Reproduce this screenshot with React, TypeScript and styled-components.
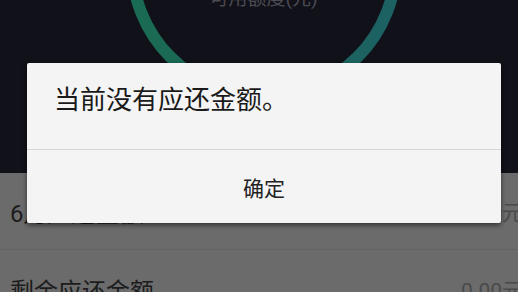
import styled, { createGlobalStyle } from 'styled-components'

// --------------------------------------------------------------------------------------------------------------
const GlobalStyle = createGlobalStyle`
  html, body {
    margin: 0;
    padding: 0;
    width: 518px;
    height: 292px;
    overflow: hidden;
  }
  body {
    font-family: Roboto, "Noto Sans CJK SC", sans-serif;
  }
`

const Page = styled.div`
  position: relative;
  width: 518px;
  height: 292px;
  overflow: hidden;
  background: #6b6b6b;
  display: flex;
  flex-direction: column;
`

const Header = styled.div`
  height: 173px;
  flex-shrink: 0;
  background: #11111a;
  overflow: hidden;
  display: flex;
  flex-direction: column;
  align-items: center;
`

const RingBox = styled.div`
  position: relative;
  flex-shrink: 0;
  width: 276px;
  height: 276px;
  margin-top: -174px;
  margin-left: 9px;
  display: flex;
  flex-direction: column;
  align-items: center;
  justify-content: flex-end;
  padding-bottom: 91px;
  box-sizing: border-box;
`

const RingSvg = styled.svg`
  position: absolute;
  inset: 0;
`

const RingLabel = styled.div`
  position: relative;
  font-size: 19px;
  line-height: 24px;
  color: #4b4b52;
`

const Row = styled.div<{ $height: number }>`
  height: ${(p) => p.$height}px;
  flex-shrink: 0;
  display: flex;
  align-items: center;
  justify-content: space-between;
  padding-left: 10px;
  margin-right: -5px;
  border-bottom: 1px solid #626262;
`

const RowLabel = styled.span`
  font-size: 24px;
  color: #1c1c1c;
`

const RowValue = styled.span`
  font-size: 21px;
  color: #4a4a4a;
`

const Overlay = styled.div`
  position: absolute;
  inset: 0;
  display: flex;
  padding: 63px 17px 0 27px;
  box-sizing: border-box;
  align-items: flex-start;
`

const Dialog = styled.div`
  width: 474px;
  background: #f4f4f4;
  border-radius: 2px;
  box-shadow: 0 2px 5px rgba(0, 0, 0, 0.55);
  display: flex;
  flex-direction: column;
`

const Message = styled.div`
  height: 87px;
  box-sizing: border-box;
  padding: 19px 27px 0;
  font-family: "Noto Sans CJK SC", sans-serif;
  font-size: 26px;
  line-height: 31px;
  color: #1a1a1a;
  border-bottom: 1px solid #d6d6d6;
`

const ConfirmButton = styled.button`
  height: 73px;
  padding: 0;
  border: none;
  background: transparent;
  font-family: "Noto Sans CJK SC", sans-serif;
  font-size: 21px;
  color: #222;
  cursor: pointer;
`

// --------------------------------------------------------------------------------------------------------------

export default function App() {
  return (
    <>
      <GlobalStyle />
      <Page>
        <Header>
          <RingBox>
            <RingSvg viewBox="0 0 276 276" width="276" height="276">
              <defs>
                <linearGradient id="ring" x1="0" y1="0" x2="1" y2="0">
                  <stop offset="0" stopColor="#1a6b53" />
                  <stop offset="1" stopColor="#1d6163" />
                </linearGradient>
              </defs>
              <circle cx="138" cy="138" r="132" fill="none" stroke="url(#ring)" strokeWidth="12" />
            </RingSvg>
            <RingLabel>可用额度(元)</RingLabel>
          </RingBox>
        </Header>

        <Row $height={76}>
          <RowLabel>6月应还金额</RowLabel>
          <RowValue>0.00元</RowValue>
        </Row>
        <Row $height={78}>
          <RowLabel>剩余应还金额</RowLabel>
          <RowValue>0.00元</RowValue>
        </Row>

        <Overlay>
          <Dialog>
            <Message>当前没有应还金额。</Message>
            <ConfirmButton>确定</ConfirmButton>
          </Dialog>
        </Overlay>
      </Page>
    </>
  )
}
